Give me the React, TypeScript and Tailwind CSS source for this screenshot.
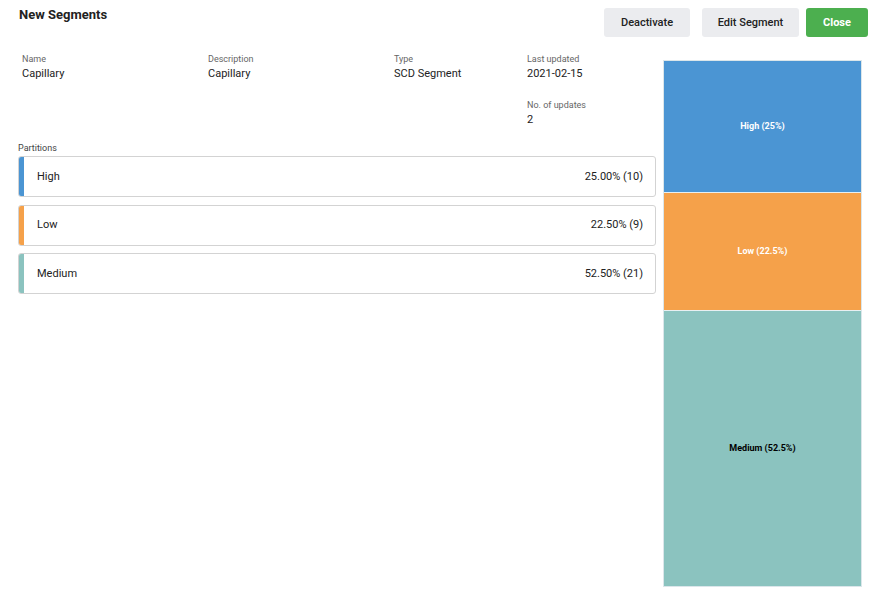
const partitions = [
  { name: 'High', value: '25.00% (10)', pct: 25, label: 'High (25%)', color: 'bg-[#4b95d3]', dark: false },
  { name: 'Low', value: '22.50% (9)', pct: 22.5, label: 'Low (22.5%)', color: 'bg-[#f5a14a]', dark: false },
  { name: 'Medium', value: '52.50% (21)', pct: 52.5, label: 'Medium (52.5%)', color: 'bg-[#8bc3bf]', dark: true },
];

function Field({ label, value }: { label: string; value: string }) {
  return (
    <div>
      <div className="text-[9px] leading-[14px] text-[#666]">{label}</div>
      <div className="text-[11px] leading-[16px] text-[#222]">{value}</div>
    </div>
  );
}

export default function App() {
  return (
    <div className="h-[594px] w-[878px] bg-white font-['Roboto',sans-serif] text-[#222]">
      {/* header */}
      <div className="flex items-start justify-between pl-[19px] pr-[10px]">
        <h1 className="pt-[5px] text-[13px] font-bold leading-[20px] text-[#222]">New Segments</h1>
        <div className="mt-[8px] flex">
          <button className="h-[29px] w-[86px] rounded-[3px] bg-[#ebecef] pt-[2px] text-[11px] font-medium text-[#222]">
            Deactivate
          </button>
          <button className="ml-[12px] h-[29px] w-[97px] rounded-[3px] bg-[#ebecef] pt-[2px] text-[11px] font-medium text-[#222]">
            Edit Segment
          </button>
          <button className="ml-[7px] h-[29px] w-[62px] rounded-[3px] bg-[#4caf4f] pt-[2px] text-[11px] font-bold text-white">
            Close
          </button>
        </div>
      </div>

      {/* body */}
      <div className="mt-[15px] flex pl-[18px]">
        <div className="w-[638px]">
          <div className="grid grid-cols-[186px_186px_133px_1fr] pl-[4px]">
            <Field label="Name" value="Capillary" />
            <Field label="Description" value="Capillary" />
            <Field label="Type" value="SCD Segment" />
            <div className="flex flex-col gap-[16px]">
              <Field label="Last updated" value="2021-02-15" />
              <Field label="No. of updates" value="2" />
            </div>
          </div>

          <div className="mt-[13px] text-[9px] leading-[14px] text-[#444]">Partitions</div>
          <div className="mt-[1px] flex flex-col gap-[7.5px]">
            {partitions.map((p) => (
              <div key={p.name} className="flex h-[41px] overflow-hidden rounded-[3px] border border-[#d3d3d3]">
                <div className={`w-[5px] shrink-0 ${p.color}`} />
                <div className="flex flex-1 items-center justify-between pl-[13px] pr-[12px] pt-[1px] text-[11px]">
                  <span>{p.name}</span>
                  <span>{p.value}</span>
                </div>
              </div>
            ))}
          </div>
        </div>

        {/* chart */}
        <div className="ml-[7px] mt-[8px] flex h-[527px] w-[199px] flex-col border border-[#dbe6ea]">
          {partitions.map((p, i) => (
            <div
              key={p.name}
              className={`flex items-center justify-center ${p.color} ${i > 0 ? 'border-t border-[#e8f0f2]' : ''}`}
              style={{ height: `${p.pct}%` }}
            >
              <span className={`text-[9px] font-bold ${p.dark ? 'text-black' : 'text-white'}`}>{p.label}</span>
            </div>
          ))}
        </div>
      </div>
    </div>
  );
}
